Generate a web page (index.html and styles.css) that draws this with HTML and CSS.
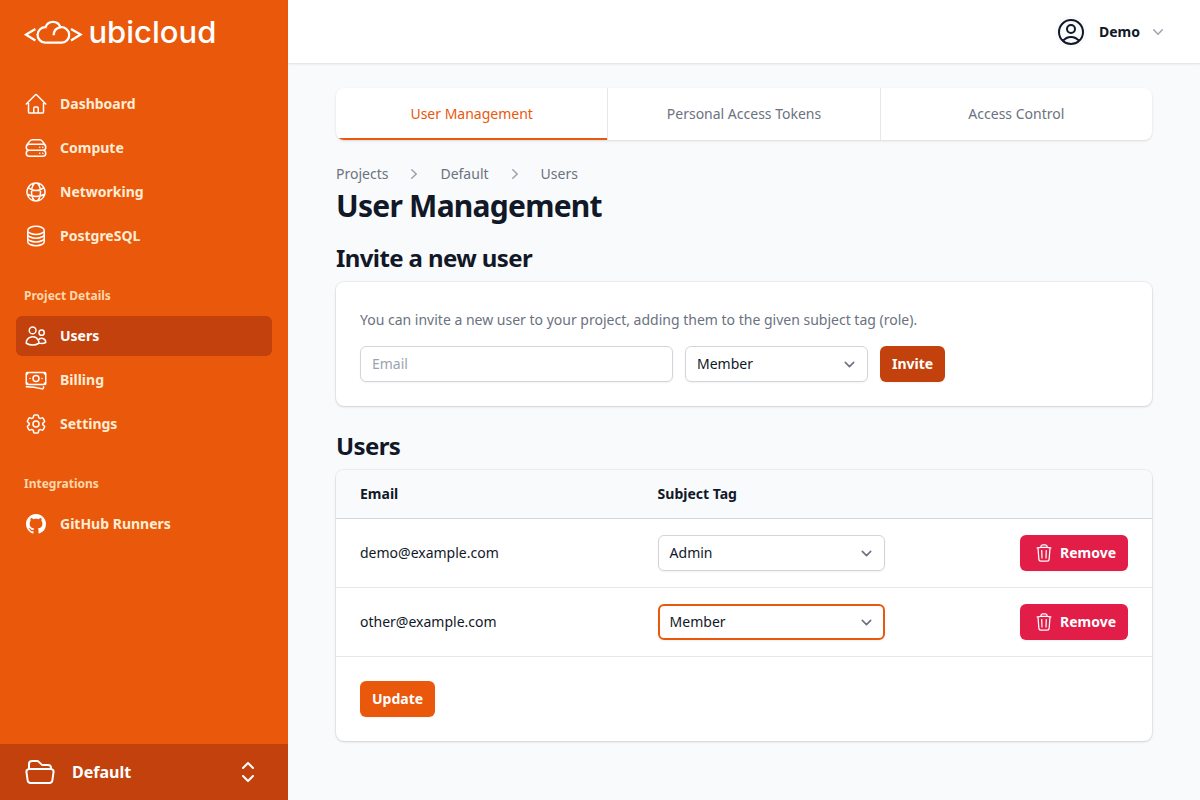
FILE: index.html
```html
<!DOCTYPE html>
<html lang="en">
<head>
<meta charset="utf-8">
<title>Ubicloud - User Management</title>
<link rel="stylesheet" href="styles.css">
</head>
<body>
<div class="app">
  <aside class="sidebar">
    <a class="logo">
      <svg width="200" height="48" viewBox="24 8 200 48" fill="none" stroke="#fff" stroke-width="2.3">
        <path d="M35.4 28.9L26 34.6L35.4 40.5M71 28.9L80.6 34.6L71 40.5"/>
        <path d="M45 42.6H61.8A7.7 7.7 0 1 0 60.3 27.3C56 28 53.7 31 53.7 35.2M45 42.6A7.7 7.7 0 0 1 45.6 27.2A7.7 7.7 0 0 1 60.3 27.3"/>
        <text class="wordmark" x="88.4" y="43" textLength="128" lengthAdjust="spacingAndGlyphs">ubicloud</text>
      </svg>
    </a>
    <nav class="nav">
      <ul class="nav-list">
        <li><a class="nav-item"><svg class="icon" viewBox="0 0 24 24"><path d="M2.25 12l8.954-8.955c.44-.439 1.152-.439 1.591 0L21.75 12M4.5 9.75v10.125c0 .621.504 1.125 1.125 1.125H9.75v-4.875c0-.621.504-1.125 1.125-1.125h2.25c.621 0 1.125.504 1.125 1.125V21h4.125c.621 0 1.125-.504 1.125-1.125V9.75M8.25 21h8.25"/></svg>Dashboard</a></li>
        <li><a class="nav-item"><svg class="icon" viewBox="0 0 24 24"><path d="M5.25 14.25h13.5m-13.5 0a3 3 0 01-3-3m3 3a3 3 0 100 6h13.5a3 3 0 100-6m-16.5-3a3 3 0 013-3h13.5a3 3 0 013 3m-19.5 0a4.5 4.5 0 01.9-2.7L5.737 5.1a3.375 3.375 0 012.7-1.35h7.126c1.062 0 2.062.5 2.7 1.35l2.587 3.45a4.5 4.5 0 01.9 2.7m0 0a3 3 0 01-3 3m0 3h.008v.008h-.008v-.008zm0-6h.008v.008h-.008v-.008zm-3 6h.008v.008h-.008v-.008zm0-6h.008v.008h-.008v-.008z"/></svg>Compute</a></li>
        <li><a class="nav-item"><svg class="icon" viewBox="0 0 24 24"><path d="M12 21a9.004 9.004 0 008.716-6.747M12 21a9.004 9.004 0 01-8.716-6.747M12 21c2.485 0 4.5-4.03 4.5-9S14.485 3 12 3m0 18c-2.485 0-4.5-4.03-4.5-9S9.515 3 12 3m0 0a8.997 8.997 0 017.843 4.582M12 3a8.997 8.997 0 00-7.843 4.582m15.686 0A11.953 11.953 0 0112 10.5c-2.998 0-5.74-1.1-7.843-2.918m15.686 0A8.959 8.959 0 0121 12c0 .778-.099 1.533-.284 2.253m0 0A17.919 17.919 0 0112 16.5c-3.162 0-6.133-.815-8.716-2.247m0 0A9.015 9.015 0 013 12c0-1.605.42-3.113 1.157-4.418"/></svg>Networking</a></li>
        <li><a class="nav-item"><svg class="icon" viewBox="0 0 24 24"><path d="M20.25 6.375c0 2.278-3.694 4.125-8.25 4.125S3.75 8.653 3.75 6.375m16.5 0c0-2.278-3.694-4.125-8.25-4.125S3.75 4.097 3.75 6.375m16.5 0v11.25c0 2.278-3.694 4.125-8.25 4.125s-8.25-1.847-8.25-4.125V6.375m16.5 0v3.75m-16.5-3.75v3.75m16.5 0v3.75C20.25 16.153 16.556 18 12 18s-8.25-1.847-8.25-4.125v-3.75m16.5 0c0 2.278-3.694 4.125-8.25 4.125s-8.25-1.847-8.25-4.125"/></svg>PostgreSQL</a></li>
      </ul>
      <div>
        <div class="nav-label">Project Details</div>
        <ul class="nav-list">
          <li><a class="nav-item nav-item-active"><svg class="icon" viewBox="0 0 24 24"><path d="M15 19.128a9.38 9.38 0 002.625.372 9.337 9.337 0 004.121-.952 4.125 4.125 0 00-7.533-2.493M15 19.128v-.003c0-1.113-.285-2.16-.786-3.07M15 19.128v.106A12.318 12.318 0 018.624 21c-2.331 0-4.512-.645-6.374-1.766l-.001-.109a6.375 6.375 0 0111.964-3.07M12 6.375a3.375 3.375 0 11-6.75 0 3.375 3.375 0 016.75 0zm8.25 2.25a2.625 2.625 0 11-5.25 0 2.625 2.625 0 015.25 0z"/></svg>Users</a></li>
          <li><a class="nav-item"><svg class="icon" viewBox="0 0 24 24"><path d="M2.25 18.75a60.07 60.07 0 0115.797 2.101c.727.198 1.453-.342 1.453-1.096V18.75M3.75 4.5v.75A.75.75 0 013 6h-.75m0 0v-.375c0-.621.504-1.125 1.125-1.125H20.25M2.25 6v9m18-10.5v.75c0 .414.336.75.75.75h.75m-1.5-1.5h.375c.621 0 1.125.504 1.125 1.125v9.75c0 .621-.504 1.125-1.125 1.125h-.375m1.5-1.5H21a.75.75 0 00-.75.75v.75m0 0H3.75m0 0h-.375a1.125 1.125 0 01-1.125-1.125V15m1.5 1.5v-.75A.75.75 0 003 15h-.75M15 10.5a3 3 0 11-6 0 3 3 0 016 0zm3 0h.008v.008H18V10.5zm-12 0h.008v.008H6V10.5z"/></svg>Billing</a></li>
          <li><a class="nav-item"><svg class="icon" viewBox="0 0 24 24"><path d="M9.594 3.94c.09-.542.56-.94 1.11-.94h2.593c.55 0 1.02.398 1.11.94l.213 1.281c.063.374.313.686.645.87.074.04.147.083.22.127.324.196.72.257 1.075.124l1.217-.456a1.125 1.125 0 011.37.49l1.296 2.247a1.125 1.125 0 01-.26 1.431l-1.003.827c-.293.24-.438.613-.431.992a6.759 6.759 0 010 .255c-.007.378.138.75.43.99l1.005.828c.424.35.534.954.26 1.43l-1.298 2.247a1.125 1.125 0 01-1.369.491l-1.217-.456c-.355-.133-.75-.072-1.076.124a6.57 6.57 0 01-.22.128c-.331.183-.581.495-.644.869l-.213 1.28c-.09.543-.56.941-1.11.941h-2.594c-.55 0-1.02-.398-1.11-.94l-.213-1.281c-.062-.374-.312-.686-.644-.87a6.52 6.52 0 01-.22-.127c-.325-.196-.72-.257-1.076-.124l-1.217.456a1.125 1.125 0 01-1.369-.49l-1.297-2.247a1.125 1.125 0 01.26-1.431l1.004-.827c.292-.24.437-.613.43-.992a6.932 6.932 0 010-.255c.007-.378-.138-.75-.43-.99l-1.004-.828a1.125 1.125 0 01-.26-1.43l1.297-2.247a1.125 1.125 0 011.37-.491l1.216.456c.356.133.751.072 1.076-.124.072-.044.146-.087.22-.128.332-.183.582-.495.644-.869l.214-1.281z"/><path d="M15 12a3 3 0 11-6 0 3 3 0 016 0z"/></svg>Settings</a></li>
        </ul>
      </div>
      <div>
        <div class="nav-label">Integrations</div>
        <ul class="nav-list">
          <li><a class="nav-item"><svg class="icon icon-github" viewBox="0 0 16 16"><path d="M8 0C3.58 0 0 3.58 0 8c0 3.54 2.29 6.53 5.47 7.59.4.07.55-.17.55-.38 0-.19-.01-.82-.01-1.49-2.01.37-2.53-.49-2.69-.94-.09-.23-.48-.94-.82-1.13-.28-.15-.68-.52-.01-.53.63-.01 1.08.58 1.23.82.72 1.21 1.87.87 2.33.66.07-.52.28-.87.51-1.07-1.78-.2-3.64-.89-3.64-3.95 0-.87.31-1.59.82-2.15-.08-.2-.36-1.02.08-2.12 0 0 .67-.21 2.2.82.64-.18 1.32-.27 2-.27s1.36.09 2 .27c1.53-1.04 2.2-.82 2.2-.82.44 1.1.16 1.92.08 2.12.51.56.82 1.27.82 2.15 0 3.07-1.87 3.75-3.65 3.95.29.25.54.73.54 1.48 0 1.07-.01 1.93-.01 2.2 0 .21.15.46.55.38A8.01 8.01 0 0016 8c0-4.42-3.58-8-8-8z"/></svg>GitHub Runners</a></li>
        </ul>
      </div>
    </nav>
    <div class="project-switcher">
      <svg class="icon icon-lg" viewBox="0 0 24 24"><path d="M3.75 9.776c.112-.017.227-.026.344-.026h15.812c.117 0 .232.009.344.026m-16.5 0a2.25 2.25 0 00-1.883 2.542l.857 6a2.25 2.25 0 002.227 1.932H19.05a2.25 2.25 0 002.227-1.932l.857-6a2.25 2.25 0 00-1.883-2.542m-16.5 0V6A2.25 2.25 0 016 3.75h3.879a1.5 1.5 0 011.06.44l2.122 2.12a1.5 1.5 0 001.06.44H18A2.25 2.25 0 0120.25 9v.776"/></svg>
      <span class="project-name">Default</span>
      <svg class="icon icon-lg" viewBox="0 0 24 24"><path d="M8.25 15L12 18.75 15.75 15m-7.5-6L12 5.25 15.75 9"/></svg>
    </div>
  </aside>
  <div class="page">
    <header class="topbar">
      <span class="avatar"><svg class="icon icon-lg" viewBox="0 0 24 24"><path d="M17.982 18.725A7.488 7.488 0 0012 15.75a7.488 7.488 0 00-5.982 2.975m11.963 0a9 9 0 10-11.963 0m11.963 0A8.966 8.966 0 0112 21a8.966 8.966 0 01-5.982-2.275M15 9.75a3 3 0 11-6 0 3 3 0 016 0z"/></svg></span>
      <span class="account-name">Demo</span>
      <svg class="chevron" viewBox="0 0 20 20"><path d="M5.23 7.21a.75.75 0 011.06.02L10 11.168l3.71-3.938a.75.75 0 111.08 1.04l-4.25 4.5a.75.75 0 01-1.08 0l-4.25-4.5a.75.75 0 01.02-1.06z"/></svg>
    </header>
    <main class="content">
      <nav class="tabs">
        <a class="tab tab-active">User Management</a>
        <a class="tab">Personal Access Tokens</a>
        <a class="tab">Access Control</a>
      </nav>
      <nav class="breadcrumb">
        <a>Projects</a>
        <svg class="chevron" viewBox="0 0 20 20"><path d="M7.21 14.77a.75.75 0 01.02-1.06L11.168 10 7.23 6.29a.75.75 0 111.04-1.08l4.5 4.25a.75.75 0 010 1.08l-4.5 4.25a.75.75 0 01-1.06-.02z"/></svg>
        <a>Default</a>
        <svg class="chevron" viewBox="0 0 20 20"><path d="M7.21 14.77a.75.75 0 01.02-1.06L11.168 10 7.23 6.29a.75.75 0 111.04-1.08l4.5 4.25a.75.75 0 010 1.08l-4.5 4.25a.75.75 0 01-1.06-.02z"/></svg>
        <a>Users</a>
      </nav>
      <h1 class="title">User Management</h1>
      <h2 class="subtitle">Invite a new user</h2>
      <section class="card invite">
        <p class="hint">You can invite a new user to your project, adding them to the given subject tag (role).</p>
        <form class="invite-form">
          <input class="field email" type="email" placeholder="Email">
          <div class="field select invite-role">Member<svg class="caret" viewBox="0 0 20 20"><path d="M6 8l4 4 4-4"/></svg></div>
          <button class="button button-dark" type="button">Invite</button>
        </form>
      </section>
      <h2 class="subtitle">Users</h2>
      <section class="card">
        <table class="users">
          <thead>
            <tr><th class="col-email">Email</th><th class="col-tag">Subject Tag</th><th></th></tr>
          </thead>
          <tbody>
            <tr>
              <td>demo@example.com</td>
              <td><div class="field select">Admin<svg class="caret" viewBox="0 0 20 20"><path d="M6 8l4 4 4-4"/></svg></div></td>
              <td><button class="button button-danger" type="button"><svg class="icon icon-sm" viewBox="0 0 24 24"><path d="M14.74 9l-.346 9m-4.788 0L9.26 9m9.968-3.21c.342.052.682.107 1.022.166m-1.022-.165L18.16 19.673a2.25 2.25 0 01-2.244 2.077H8.084a2.25 2.25 0 01-2.244-2.077L4.772 5.79m14.456 0a48.108 48.108 0 00-3.478-.397m-12 .562c.34-.059.68-.114 1.022-.165m0 0a48.11 48.11 0 013.478-.397m7.5 0v-.916c0-1.18-.91-2.164-2.09-2.201a51.964 51.964 0 00-3.32 0c-1.18.037-2.09 1.022-2.09 2.201v.916m7.5 0a48.667 48.667 0 00-7.5 0"/></svg>Remove</button></td>
            </tr>
            <tr>
              <td>other@example.com</td>
              <td><div class="field select select-focus">Member<svg class="caret" viewBox="0 0 20 20"><path d="M6 8l4 4 4-4"/></svg></div></td>
              <td><button class="button button-danger" type="button"><svg class="icon icon-sm" viewBox="0 0 24 24"><path d="M14.74 9l-.346 9m-4.788 0L9.26 9m9.968-3.21c.342.052.682.107 1.022.166m-1.022-.165L18.16 19.673a2.25 2.25 0 01-2.244 2.077H8.084a2.25 2.25 0 01-2.244-2.077L4.772 5.79m14.456 0a48.108 48.108 0 00-3.478-.397m-12 .562c.34-.059.68-.114 1.022-.165m0 0a48.11 48.11 0 013.478-.397m7.5 0v-.916c0-1.18-.91-2.164-2.09-2.201a51.964 51.964 0 00-3.32 0c-1.18.037-2.09 1.022-2.09 2.201v.916m7.5 0a48.667 48.667 0 00-7.5 0"/></svg>Remove</button></td>
            </tr>
          </tbody>
        </table>
        <div class="card-footer"><button class="button" type="button">Update</button></div>
      </section>
    </main>
  </div>
</div>
</body>
</html>
```
FILE: styles.css
```css
*, *::before, *::after { box-sizing: border-box; }
body {
  margin: 0;
  font-family: "Noto Sans", sans-serif;
  font-size: 14px;
  line-height: 20px;
  color: #111827;
  background: #f9fafb;
}
h1, h2, p, ul { margin: 0; padding: 0; }
ul { list-style: none; }
svg { display: block; flex: none; }

.app { display: flex; height: 800px; overflow: hidden; }

.icon {
  width: 24px;
  height: 24px;
  fill: none;
  stroke: currentColor;
  stroke-width: 1.5;
  stroke-linecap: round;
  stroke-linejoin: round;
}
.icon-lg { width: 32px; height: 32px; }
.icon-sm { width: 20px; height: 20px; }
.icon-github { width: 20px; height: 20px; margin: 0 2px; fill: currentColor; stroke: none; }
.chevron { width: 20px; height: 20px; fill: #9ca3af; }

.sidebar {
  display: flex;
  flex-direction: column;
  width: 288px;
  flex: none;
  background: #ea580c;
}
.logo { display: flex; align-items: center; height: 64px; padding: 0 24px; }
.wordmark {
  font-family: Inter, sans-serif;
  font-size: 30px;
  font-weight: 500;
  fill: #fff;
  stroke: none;
}
.nav {
  flex: 1;
  display: flex;
  flex-direction: column;
  gap: 28px;
  padding: 20px 16px 0;
}
.nav-list { display: flex; flex-direction: column; gap: 4px; }
.nav-label {
  padding: 0 8px;
  margin-bottom: 8px;
  font-size: 12px;
  font-weight: 700;
  line-height: 24px;
  color: #fed7aa;
}
.nav-item {
  display: flex;
  align-items: center;
  gap: 12px;
  padding: 8px;
  border-radius: 6px;
  font-weight: 700;
  line-height: 24px;
  color: #ffedd5;
}
.nav-item .icon { color: #fff; }
.nav-item-active { background: #c2410c; color: #fff; }
.project-switcher {
  display: flex;
  align-items: center;
  gap: 16px;
  height: 56px;
  padding: 0 24px;
  background: #c2410c;
  color: #fff;
}
.project-name { flex: 1; font-size: 16px; font-weight: 700; line-height: 24px; }

.page { flex: 1; min-width: 0; }
.topbar {
  display: flex;
  align-items: center;
  justify-content: flex-end;
  height: 64px;
  padding: 0 32px;
  border-bottom: 1px solid #e5e7eb;
  background: #fff;
  box-shadow: 0 1px 2px rgba(0, 0, 0, .05);
}
.avatar { border-radius: 50%; background: #f9fafb; }
.account-name { margin: 0 8px 0 12px; font-weight: 700; line-height: 24px; }

.content { padding: 24px 48px; }
.tabs {
  display: flex;
  overflow: hidden;
  border-radius: 8px;
  background: #fff;
  box-shadow: 0 1px 3px rgba(0, 0, 0, .1), 0 1px 2px -1px rgba(0, 0, 0, .1);
}
.tab { flex: 1 1 0; padding: 16px; text-align: center; color: #6b7280; }
.tab + .tab { border-left: 1px solid #e5e7eb; }
.tab-active { color: #ea580c; box-shadow: inset 0 -2px #ea580c; }

.breadcrumb { display: flex; gap: 16px; margin-top: 24px; color: #6b7280; }
.title {
  margin-top: 4px;
  font-size: 30px;
  font-weight: 700;
  line-height: 36px;
  letter-spacing: -.025em;
}
.subtitle {
  margin: 20px 0 10px;
  font-size: 24px;
  font-weight: 700;
  line-height: 28px;
  letter-spacing: -.025em;
}
.card {
  overflow: hidden;
  border-radius: 8px;
  background: #fff;
  box-shadow: 0 0 0 1px rgba(17, 24, 39, .05), 0 1px 3px rgba(0, 0, 0, .1), 0 1px 2px -1px rgba(0, 0, 0, .1);
}
.invite { padding: 28px 24px 24px; margin-bottom: 26px; }
.hint { margin-bottom: 16px; color: #6b7280; }
.invite-form { display: flex; gap: 12px; }
.field {
  height: 36px;
  padding: 7px 11px;
  border: 1px solid #d1d5db;
  border-radius: 6px;
  background: #fff;
  color: #111827;
  font: inherit;
  box-shadow: 0 1px 2px rgba(0, 0, 0, .05);
}
.email { width: 313px; padding: 6px 11px 8px; }
.email::placeholder { color: #9ca3af; opacity: 1; }
.select { display: flex; align-items: center; justify-content: space-between; padding-right: 7px; }
.select-focus { border: 2px solid #ea580c; padding: 6px 6px 6px 10px; }
.invite-role { width: 183px; }
.caret {
  width: 21px;
  height: 21px;
  fill: none;
  stroke: #6b7280;
  stroke-width: 1.5;
  stroke-linecap: round;
  stroke-linejoin: round;
}
.button {
  display: inline-flex;
  align-items: center;
  height: 36px;
  padding: 0 12px;
  border: 0;
  border-radius: 6px;
  background: #ea580c;
  color: #fff;
  font: inherit;
  font-weight: 700;
  box-shadow: 0 1px 2px rgba(0, 0, 0, .05);
}
.button-dark { background: #c2410c; }
.button-danger { gap: 6px; padding-left: 14px; background: #e11d48; vertical-align: top; }

.users { width: 100%; border-collapse: separate; border-spacing: 0; table-layout: fixed; }
.users th {
  height: 49px;
  padding: 0;
  border-bottom: 1px solid #d1d5db;
  background: #f9fafb;
  text-align: left;
  font-weight: 700;
}
.users td { height: 69px; padding: 0; border-bottom: 1px solid #e5e7eb; }
.users th:first-child, .users td:first-child { padding-left: 24px; }
.users td:last-child { padding-right: 24px; text-align: right; }
.col-email { width: 321.6px; }
.col-tag { width: 227px; }
.card-footer { display: flex; padding: 24px; }
```
